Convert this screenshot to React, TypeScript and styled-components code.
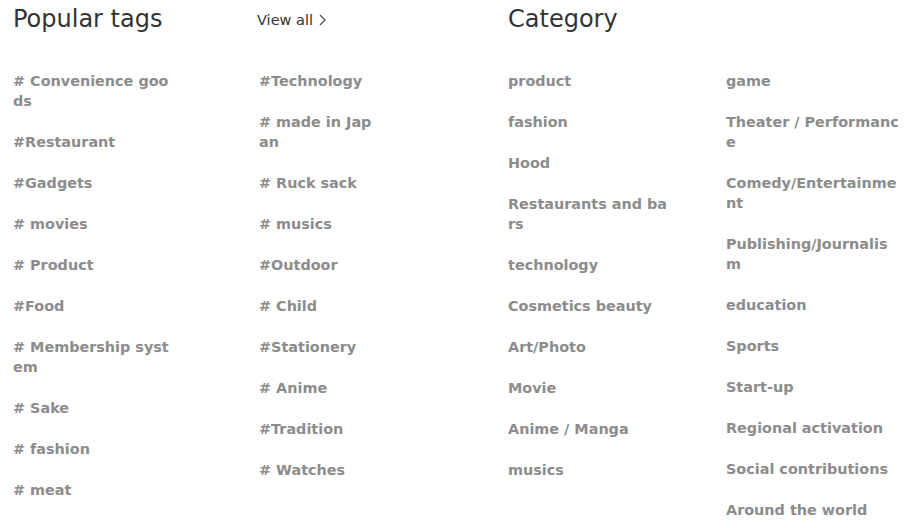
import React from 'react';
import styled, { createGlobalStyle } from 'styled-components';

const GlobalStyle = createGlobalStyle`
  html, body {
    margin: 0;
    padding: 0;
    background: #ffffff;
  }
  body {
    font-family: "DejaVu Sans", Verdana, sans-serif;
  }
`;

const popularTags: string[][] = [
  [
    '# Convenience goods',
    '#Restaurant',
    '#Gadgets',
    '# movies',
    '# Product',
    '#Food',
    '# Membership system',
    '# Sake',
    '# fashion',
    '# meat',
  ],
  [
    '#Technology',
    '# made in Japan',
    '# Ruck sack',
    '# musics',
    '#Outdoor',
    '# Child',
    '#Stationery',
    '# Anime',
    '#Tradition',
    '# Watches',
  ],
];

const categories: string[][] = [
  [
    'product',
    'fashion',
    'Hood',
    'Restaurants and bars',
    'technology',
    'Cosmetics beauty',
    'Art/Photo',
    'Movie',
    'Anime / Manga',
    'musics',
  ],
  [
    'game',
    'Theater / Performance',
    'Comedy/Entertainment',
    'Publishing/Journalism',
    'education',
    'Sports',
    'Start-up',
    'Regional activation',
    'Social contributions',
    'Around the world',
  ],
];

const Page = styled.div`
  display: flex;
  padding: 4px 0 0 13px;
`;

const Section = styled.section<{ $cols: string; $width: number }>`
  display: grid;
  grid-template-columns: ${p => p.$cols};
  width: ${p => p.$width}px;
  align-content: start;
`;

const Header = styled.div`
  grid-column: 1 / -1;
  display: grid;
  grid-template-columns: inherit;
  align-items: center;
  height: 30px;
  margin-bottom: 37px;
`;

const Title = styled.h2`
  margin: 0;
  font-size: 24px;
  font-weight: 400;
  color: #333333;
  line-height: 30px;
  white-space: nowrap;
`;

const ViewAll = styled.a`
  display: flex;
  align-items: center;
  gap: 6px;
  font-size: 14.5px;
  color: #333333;
  text-decoration: none;
  margin: 2px 0 0 -2px;
  cursor: pointer;
`;

const List = styled.ul<{ $width: number }>`
  list-style: none;
  margin: 0;
  padding: 0;
  width: ${p => p.$width}px;
`;

const Item = styled.li`
  font-size: 14.4px;
  font-weight: 700;
  line-height: 20px;
  color: #8c8c8c;
  word-break: break-all;
  margin-bottom: 21px;
`;

const Chevron = () => (
  <svg width="7" height="12" viewBox="0 0 7 12" fill="none">
    <path d="M1 1l5 5-5 5" stroke="#555" strokeWidth="1.4" />
  </svg>
);

export default function App() {
  return (
    <>
      <GlobalStyle />
      <Page>
        <Section $cols="246px 249px" $width={495}>
          <Header>
            <Title>Popular tags</Title>
            <ViewAll>
              View all <Chevron />
            </ViewAll>
          </Header>
          <List $width={160}>
            {popularTags[0].map(t => (
              <Item key={t}>{t}</Item>
            ))}
          </List>
          <List $width={115}>
            {popularTags[1].map(t => (
              <Item key={t}>{t}</Item>
            ))}
          </List>
        </Section>
        <Section $cols="218px 1fr" $width={400}>
          <Header>
            <Title>Category</Title>
          </Header>
          <List $width={160}>
            {categories[0].map(t => (
              <Item key={t}>{t}</Item>
            ))}
          </List>
          <List $width={176}>
            {categories[1].map(t => (
              <Item key={t}>{t}</Item>
            ))}
          </List>
        </Section>
      </Page>
    </>
  );
}
